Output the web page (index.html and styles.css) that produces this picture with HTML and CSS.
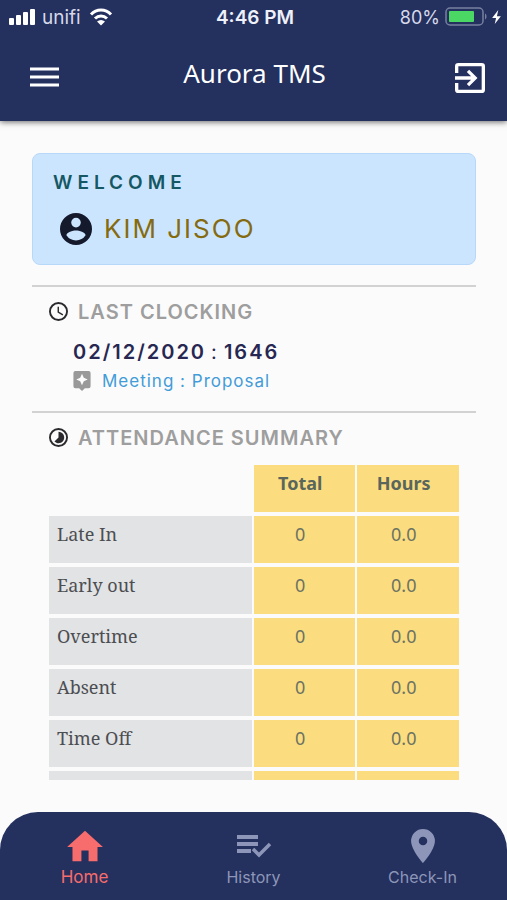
FILE: index.html
```html
<!DOCTYPE html>
<html lang="en">
<head>
<meta charset="utf-8">
<meta name="viewport" content="width=device-width, initial-scale=1">
<title>Aurora TMS</title>
<link rel="stylesheet" href="styles.css">
</head>
<body>
<header class="top">
  <div class="status">
    <div class="status-side">
      <svg class="signal" viewBox="0 0 27 16" aria-hidden="true"><rect x="0" y="9" width="5" height="7" rx="1"/><rect x="7" y="6" width="5" height="10" rx="1"/><rect x="14" y="3" width="5" height="13" rx="1"/><rect x="21" y="0" width="5" height="16" rx="1"/></svg>
      <span class="carrier">unifi</span>
      <svg class="wifi" viewBox="0 0 24 18" aria-hidden="true"><path d="M2 6.500C7.500.5 16.500.5 22 6.500M6 10.500c3.500-3.500 8.500-3.500 12 0" fill="none" stroke="currentColor" stroke-width="3"/><path d="M8 13.500c2.500-2 5.500-2 8 0l-4 4z"/></svg>
    </div>
    <time class="clock">4:46 PM</time>
    <div class="status-side status-end">
      <span class="percent">80%</span>
      <svg class="battery" viewBox="0 0 42 20" aria-hidden="true"><rect x="1" y="1" width="37" height="17" rx="4" fill="none" stroke="#76809f" stroke-width="1.500"/><rect x="4" y="4" width="25" height="11" rx="1" fill="#4bd763"/><path d="M40 6.500c2 1 2 5 0 6z" fill="#76809f"/></svg>
      <svg class="bolt" viewBox="0 0 10 16" aria-hidden="true"><path d="M7 0 0 9h4.500L3 16l7-9H5.500z"/></svg>
    </div>
  </div>
  <div class="appbar">
    <button class="icon-button" type="button" aria-label="Menu"><svg class="menu-icon" viewBox="0 0 30 21"><path d="M0 2h29M0 10h29M0 18h29" stroke="currentColor" stroke-width="3.200"/></svg></button>
    <h1 class="title">Aurora TMS</h1>
    <button class="icon-button" type="button" aria-label="Log out"><svg class="exit-icon" viewBox="3 3 18 18"><path d="M10.090 15.590 11.500 17l5-5-5-5-1.410 1.410L12.670 11H3v2h9.670zM19 3H5a2 2 0 0 0-2 2v4h2V5h14v14H5v-4H3v4a2 2 0 0 0 2 2h14a2 2 0 0 0 2-2V5a2 2 0 0 0-2-2z"/></svg></button>
  </div>
</header>
<main class="content">
  <section class="welcome">
    <h2 class="welcome-label">WELCOME</h2>
    <p class="user"><svg class="avatar" viewBox="2 2 20 20" aria-hidden="true"><path d="M12 2a10 10 0 1 0 0 20 10 10 0 0 0 0-20zm0 3a3 3 0 1 1 0 6 3 3 0 0 1 0-6zm0 14.200a7.200 7.200 0 0 1-6-3.220c.030-1.990 4-3.080 6-3.080s5.970 1.090 6 3.080a7.200 7.200 0 0 1-6 3.220z"/></svg><span>KIM JISOO</span></p>
  </section>
  <section class="section">
    <h2 class="section-title"><svg class="section-icon" viewBox="2 2 20 20" aria-hidden="true"><path d="M12 2a10 10 0 1 0 0 20 10 10 0 0 0 0-20zm0 18a8 8 0 1 1 0-16 8 8 0 0 1 0 16zm.5-13H11v6l5.200 3.200.8-1.300-4.500-2.700z"/></svg>LAST CLOCKING</h2>
    <p class="stamp">02/12/2020 <span class="colon">:</span> 1646</p>
    <p class="note"><svg class="note-icon" viewBox="3 2 18 21" aria-hidden="true"><path d="M19 2H5a2 2 0 0 0-2 2v14a2 2 0 0 0 2 2h4l3 3 3-3h4a2 2 0 0 0 2-2V4a2 2 0 0 0-2-2zm-5.120 10.880L12 17l-1.880-4.120L6 11l4.120-1.880L12 5l1.880 4.120L18 11z"/></svg><span>Meeting : Proposal</span></p>
  </section>
  <section class="section summary">
    <h2 class="section-title"><svg class="section-icon" viewBox="2 2 20 20" aria-hidden="true"><path d="M12 2a10 10 0 1 0 0 20 10 10 0 0 0 0-20zm0 18a8 8 0 1 1 0-16 8 8 0 0 1 0 16zm0-14v6l-4.240 4.240A6 6 0 1 0 12 6z"/></svg>ATTENDANCE SUMMARY</h2>
    <div class="table-scroll">
      <table class="table">
        <thead><tr><td class="blank"></td><th scope="col">Total</th><th scope="col">Hours</th></tr></thead>
        <tbody>
          <tr><th scope="row">Late In</th><td>0</td><td>0.0</td></tr>
          <tr><th scope="row">Early out</th><td>0</td><td>0.0</td></tr>
          <tr><th scope="row">Overtime</th><td>0</td><td>0.0</td></tr>
          <tr><th scope="row">Absent</th><td>0</td><td>0.0</td></tr>
          <tr><th scope="row">Time Off</th><td>0</td><td>0.0</td></tr>
          <tr><th scope="row"></th><td></td><td></td></tr>
        </tbody>
      </table>
    </div>
  </section>
</main>
<nav class="tabs">
  <a class="tab active" href="#home" aria-current="page"><svg class="tab-icon" viewBox="2 2 20 19" aria-hidden="true"><path d="M10 20v-6h4v6h5v-8h3L12 3 2 12h3v8z"/></svg>Home</a>
  <a class="tab" href="#history"><svg class="tab-icon" viewBox="0 0 36 32" aria-hidden="true"><path d="M1 5h21v4H1zm0 7h21v4H1zm0 7h14v4H1z"/><path d="m17 19 6 6 11-11" fill="none" stroke="currentColor" stroke-width="3.500"/></svg>History</a>
  <a class="tab" href="#check-in"><svg class="tab-icon" viewBox="5 2 14 20" aria-hidden="true"><path d="M12 2a7 7 0 0 0-7 7c0 5.250 7 13 7 13s7-7.750 7-13a7 7 0 0 0-7-7zm0 9.500a2.500 2.500 0 1 1 0-5 2.500 2.500 0 0 1 0 5z"/></svg>Check-In</a>
</nav>
</body>
</html>
```
FILE: styles.css
```css
:root {
  --navy: #24305e;
  --page: #fbfbfb;
  --yellow: #fbdd80;
}
* { box-sizing: border-box; }
body {
  margin: 0;
  height: 100vh;
  display: flex;
  flex-direction: column;
  background: var(--page);
  font-family: Inter, "Liberation Sans", sans-serif;
}
h1, h2, p { margin: 0; }
svg { display: block; flex: none; fill: currentColor; }

.top {
  background: var(--navy);
  color: #fff;
  box-shadow: 0 1px 6px rgba(0, 0, 0, 0.6);
}
.status {
  display: grid;
  grid-template-columns: 1fr auto 1fr;
  align-items: center;
  height: 34px;
  padding: 0 6px 0 9px;
}
.status-side { display: flex; align-items: center; gap: 6px; }
.status-end { justify-content: flex-end; gap: 5px; }
.signal { width: 27px; height: 16px; }
.carrier { font-size: 19px; color: #d5d9ea; }
.wifi { width: 24px; height: 18px; margin-left: 2px; }
.clock { font-size: 19px; font-weight: 600; color: #eef0fa; }
.percent { font-size: 18px; color: #d5d9ea; }
.battery { width: 42px; height: 20px; }
.bolt { width: 9px; height: 14px; }
.appbar {
  display: flex;
  align-items: center;
  justify-content: space-between;
  height: 87px;
  padding: 0 22px 0 30px;
}
.icon-button {
  display: flex;
  padding: 0;
  border: 0;
  background: none;
  color: inherit;
  cursor: pointer;
}
.menu-icon { width: 30px; height: 21px; }
.exit-icon { width: 30px; height: 30px; }
.title {
  font: 400 26px/32px "Noto Sans", sans-serif;
  padding: 0 6px 10px 0;
}

.content {
  flex: 1;
  min-height: 0;
  display: flex;
  flex-direction: column;
  padding: 32px 31px 32px 32px;
}
.welcome {
  padding: 16px 20px 18px;
  margin-bottom: 20px;
  border: 1px solid #b8d8fa;
  border-radius: 8px;
  background: #cce5ff;
}
.welcome-label {
  font-size: 19px;
  line-height: 26px;
  font-weight: 600;
  letter-spacing: 5px;
  color: #155863;
}
.user {
  display: flex;
  align-items: center;
  gap: 12px;
  margin-top: 16px;
  padding-left: 7px;
  font-size: 26px;
  line-height: 34px;
  letter-spacing: 2px;
  color: #856b10;
}
.avatar { width: 32px; height: 32px; color: #14192b; }

.section {
  padding: 12px 17px 18px;
  border-top: 2px solid #d2d2d2;
}
.section-title {
  display: flex;
  align-items: center;
  gap: 10px;
  font-size: 20px;
  line-height: 26px;
  font-weight: 600;
  letter-spacing: 1px;
  color: #9e9e9e;
}
.section-icon { width: 19px; height: 19px; margin-bottom: 2px; color: #2a2a2e; }
.stamp {
  margin-top: 14px;
  padding-left: 24px;
  font-size: 20px;
  line-height: 26px;
  font-weight: 600;
  letter-spacing: 2px;
  word-spacing: -2px;
  color: #272752;
}
.colon { font-weight: 400; }
.note {
  display: flex;
  align-items: center;
  gap: 11px;
  margin-top: 4px;
  padding-left: 24px;
  font-size: 17px;
  line-height: 24px;
  letter-spacing: 1px;
  color: #439cd8;
}
.note-icon { width: 18px; height: 20px; color: #999; }

.summary {
  flex: 1;
  min-height: 0;
  display: flex;
  flex-direction: column;
  padding-bottom: 0;
}
.table-scroll {
  flex: 1;
  min-height: 0;
  margin-top: 14px;
  overflow-y: auto;
  scrollbar-width: none;
}
.table {
  width: 100%;
  table-layout: fixed;
  border-collapse: separate;
  border-spacing: 0;
  font: 18px/24px "Noto Sans", sans-serif;
  color: #6c7363;
}
.table th, .table td {
  height: 51px;
  padding: 6px 16px 6px 8px;
  vertical-align: top;
  text-align: center;
  background: var(--yellow);
  border-bottom: 4px solid var(--page);
  border-right: 2px solid var(--page);
}
.table tr > :first-child { width: 50%; }
.table tr > :last-child { border-right: 0; }
.table thead th { font-weight: 700; color: #5a665c; }
.table .blank { background: none; }
.table tbody th {
  text-align: left;
  background: #e2e3e5;
  color: #4c4e52;
  font-family: "Noto Serif", "DejaVu Serif Condensed", "DejaVu Serif", serif;
  font-weight: 400;
}

.tabs {
  display: grid;
  grid-template-columns: repeat(3, 1fr);
  height: 88px;
  padding-top: 17px;
  border-radius: 38px 38px 0 0;
  background: var(--navy);
}
.tab {
  display: flex;
  flex-direction: column;
  align-items: center;
  gap: 2px;
  font-size: 16px;
  line-height: 24px;
  color: #8d96b8;
  text-decoration: none;
}
.tab-icon { width: 36px; height: 34px; }
.active { color: #f76c6c; font-size: 17px; }
```
